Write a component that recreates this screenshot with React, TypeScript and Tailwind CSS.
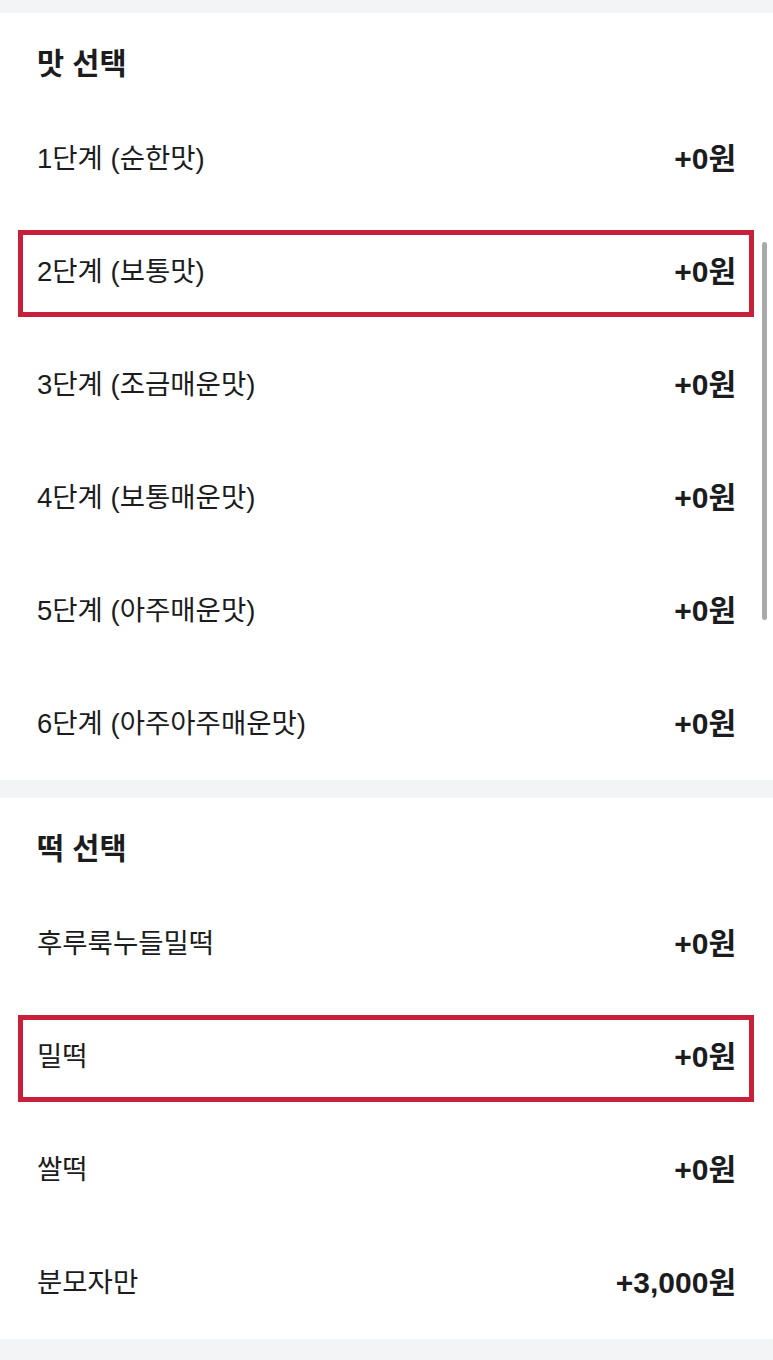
import React from 'react';

type Option = { label: string; price: string; marked?: boolean };

const tasteOptions: Option[] = [
  { label: '1단계 (순한맛)', price: '+0원' },
  { label: '2단계 (보통맛)', price: '+0원', marked: true },
  { label: '3단계 (조금매운맛)', price: '+0원' },
  { label: '4단계 (보통매운맛)', price: '+0원' },
  { label: '5단계 (아주매운맛)', price: '+0원' },
  { label: '6단계 (아주아주매운맛)', price: '+0원' },
];

const riceCakeOptions: Option[] = [
  { label: '후루룩누들밀떡', price: '+0원' },
  { label: '밀떡', price: '+0원', marked: true },
  { label: '쌀떡', price: '+0원' },
  { label: '분모자만', price: '+3,000원' },
];

function OptionRow({ option }: { option: Option }) {
  return (
    <div className="relative flex h-[113px] items-center justify-between px-[37px]">
      <span className="text-[27.5px] text-[#1c1c1e]">{option.label}</span>
      <span className="text-[30px] font-bold text-[#1c1c1e]">{option.price}</span>
      {/* highlight annotation */}
      {option.marked && (
        <div className="pointer-events-none absolute left-[18px] right-[19px] top-[15px] bottom-[11px] border-[5px] border-[#c8203a]" />
      )}
    </div>
  );
}

function OptionGroup({ title, options }: { title: string; options: Option[] }) {
  return (
    <section className="bg-white pt-[32px]">
      <h2 className="h-[37px] px-[37px] text-[29.5px] font-bold leading-[37px] text-[#1c1c1e]">{title}</h2>
      <div className="mt-[20px]">
        {options.map((o) => (
          <OptionRow key={o.label} option={o} />
        ))}
      </div>
    </section>
  );
}

export default function App() {
  return (
    <div
      className="relative h-[1360px] w-full overflow-hidden bg-[#f2f4f5]"
      style={{ fontFamily: '"Liberation Sans", "Noto Sans CJK KR", sans-serif' }}
    >
      <div className="h-[13px]" />
      <OptionGroup title="맛 선택" options={tasteOptions} />
      <div className="h-[18px]" />
      <OptionGroup title="떡 선택" options={riceCakeOptions} />

      {/* scrollbar */}
      <div className="absolute right-[6px] top-[242px] h-[378px] w-[5px] rounded-full bg-[#a9a9a9]" />
    </div>
  );
}
